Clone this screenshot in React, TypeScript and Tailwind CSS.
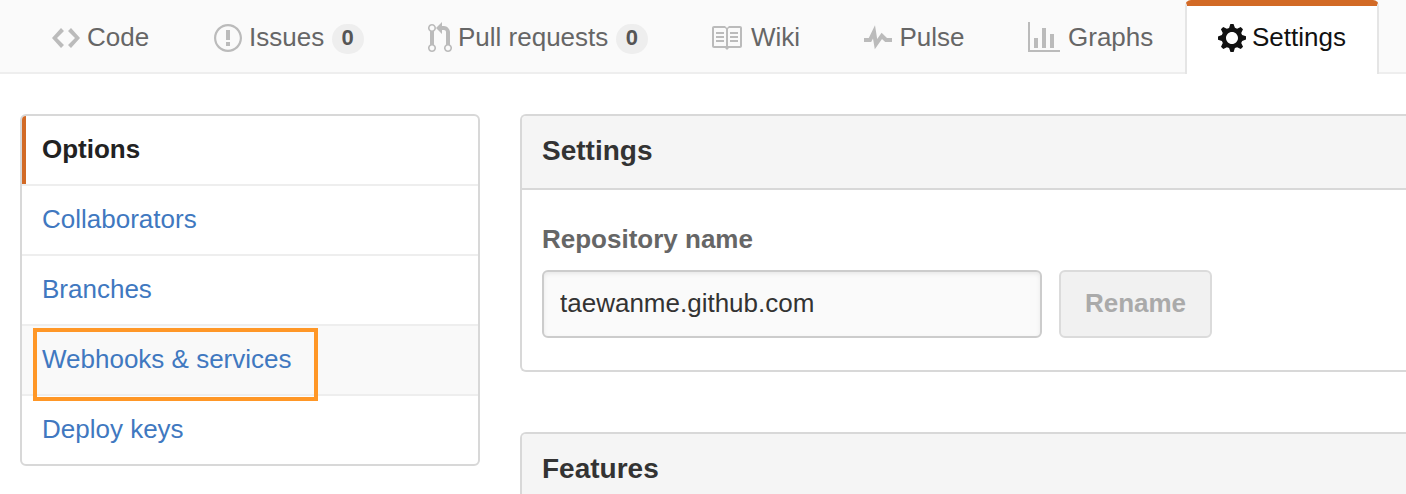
import React from "react";

const icons = {
  code: { w: 14, d: "M9.5 3L8 4.5 11.5 8 8 11.5 9.5 13 14 8 9.5 3zm-5 0L0 8l4.5 5L6 11.5 2.5 8 6 4.5 4.5 3z" },
  issue: { w: 14, d: "M7 2.1c3.25 0 5.9 2.65 5.9 5.9s-2.65 5.9-5.9 5.9A5.9 5.9 0 0 1 1.1 8c0-3.25 2.65-5.9 5.9-5.9zM7 1C3.14 1 0 4.14 0 8s3.14 7 7 7 7-3.14 7-7-3.14-7-7-7zm1 3H6v5h2V4zm0 6H6v2h2v-2z" },
  pull: { w: 12, d: "M11 11.28V5c-.03-.78-.34-1.47-.94-2.06C9.46 2.35 8.78 2.03 8 2H7V0L4 3l3 3V4h1c.27.02.48.11.69.31.21.2.3.42.31.69v6.28A1.993 1.993 0 0 0 10 15a1.993 1.993 0 0 0 1-3.72zm-1 2.92c-.66 0-1.2-.55-1.2-1.2 0-.65.55-1.2 1.2-1.2.65 0 1.2.55 1.2 1.2 0 .65-.55 1.2-1.2 1.2zM4 3c0-1.11-.89-2-2-2a1.993 1.993 0 0 0-1 3.72v6.56A1.993 1.993 0 0 0 2 15a1.993 1.993 0 0 0 1-3.72V4.72c.59-.34 1-.98 1-1.72zm-.8 10c0 .66-.55 1.2-1.2 1.2-.65 0-1.2-.55-1.2-1.2 0-.65.55-1.2 1.2-1.2.65 0 1.2.55 1.2 1.2zM2 4.2C1.34 4.2.8 3.65.8 3c0-.65.55-1.2 1.2-1.2.65 0 1.2.55 1.2 1.2 0 .65-.55 1.2-1.2 1.2z" },
  book: { w: 16, d: "M3 5h4v1H3V5zm0 3h4V7H3v1zm0 2h4V9H3v1zm11-5h-4v1h4V5zm0 2h-4v1h4V7zm0 2h-4v1h4V9zm2-6v9c0 .55-.45 1-1 1H9.5l-1 1-1-1H2c-.55 0-1-.45-1-1V3c0-.55.45-1 1-1h5.5l1 1 1-1H15c.55 0 1 .45 1 1zm-8 .5L7.5 3H2v9h6V3.5zm7-.5H9.5l-.5.5V12h6V3z" },
  pulse: { w: 14, d: "M11.5 8L8.8 5.4 6.6 8.5 5.5 1.6 2.38 8H0v2h3.6l.9-1.8.9 5.4L9 8.5l1.6 1.5H14V8h-2.5z" },
  graph: { w: 16, d: "M16 14v1H0V0h1v14h15zM5 13H3V8h2v5zm4 0H7V3h2v10zm4 0h-2V6h2v7z" },
  gear: { w: 14, d: "M14 8.77v-1.6l-1.94-.64-.45-1.09.88-1.84-1.13-1.13-1.81.91-1.09-.45-.69-1.92h-1.6l-.63 1.94-1.11.45-1.84-.88-1.13 1.13.91 1.81-.45 1.09L0 7.23v1.59l1.94.64.45 1.09-.88 1.84 1.13 1.13 1.81-.91 1.09.45.69 1.92h1.59l.63-1.94 1.11-.45 1.84.88 1.13-1.13-.92-1.81.47-1.09L14 8.75v.02zM7 11c-1.66 0-3-1.34-3-3s1.34-3 3-3 3 1.34 3 3-1.34 3-3 3z" },
};

function Icon({ name, className }: { name: keyof typeof icons; className: string }) {
  const icon = icons[name];
  return (
    <svg width={icon.w * 2} height={32} viewBox={`0 0 ${icon.w} 16`} className={`shrink-0 ${className}`} fill="currentColor" aria-hidden="true">
      <path d={icon.d} />
    </svg>
  );
}

type Tab = { icon: keyof typeof icons; label: string; width: string; gap: string; count?: number };

const tabs: Tab[] = [
  { icon: "code", label: "Code", width: "w-[162px]", gap: "mr-[7px]" },
  { icon: "issue", label: "Issues", width: "w-[214px]", gap: "mr-[7px]", count: 0 },
  { icon: "pull", label: "Pull requests", width: "w-[282px]", gap: "mr-1.5", count: 0 },
  { icon: "book", label: "Wiki", width: "w-[154px]", gap: "mr-[9px]" },
  { icon: "pulse", label: "Pulse", width: "w-[164px]", gap: "mr-[7.5px]" },
  { icon: "graph", label: "Graphs", width: "w-[158px]", gap: "mr-2" },
];

const menu = ["Options", "Collaborators", "Branches", "Webhooks & services", "Deploy keys"];

function MenuItem({ label }: { label: string }) {
  const selected = label === "Options";
  const highlighted = label === "Webhooks & services";
  const state = selected
    ? "border-l-4 border-l-[#d26a26] pl-4 font-bold text-[#222] rounded-tl-[4px]"
    : highlighted
      ? "relative bg-[#f9f9f9] pl-5 text-[#4078c0]"
      : "pl-5 text-[#4078c0]";
  return (
    <li className="border-b-2 border-[#eee] last:border-b-0">
      <a href="#" className={`flex h-[68px] items-start pt-[13px] leading-10 ${state}`}>
        {label}
        {highlighted && <span className="absolute top-0.5 left-[11px] z-10 h-[73px] w-[285px] border-4 border-[#ff9727]" />}
      </a>
    </li>
  );
}

function Panel({ title, children }: { title: string; children?: React.ReactNode }) {
  return (
    <section className="rounded-l-md border-2 border-r-0 border-[#d8d8d8]">
      <h2 className="h-[74px] rounded-tl-[4px] border-b-2 border-[#d8d8d8] bg-[#f5f5f5] pt-[15px] pl-5 text-[28px] leading-10 font-bold text-[#333]">
        {title}
      </h2>
      {children}
    </section>
  );
}

export default function App() {
  return (
    <div className="h-[494px] overflow-hidden bg-white font-['Liberation_Sans',Arial,sans-serif] text-[26px]">
      <nav className="flex h-[74px] pl-[52px] whitespace-nowrap text-[#666] shadow-[inset_0_-2px_0_#eee] bg-[#fafafa]">
        {tabs.map((tab) => (
          <a key={tab.label} href="#" className={`flex shrink-0 items-start ${tab.width}`}>
            <Icon name={tab.icon} className={`mt-[22px] text-[#bbb] ${tab.gap}`} />
            <span className="pt-[17px] leading-10">{tab.label}</span>
            {tab.count !== undefined && (
              <span className="mt-6 ml-[7.5px] h-[30px] w-8 rounded-full bg-[#eee] text-center text-[22px] leading-7 font-bold text-[#555]">
                {tab.count}
              </span>
            )}
          </a>
        ))}
        <a href="#" className="-ml-px flex h-[74px] w-[194px] shrink-0 items-start gap-1.5 rounded-t-md border-x-2 border-t-6 border-x-[#e5e5e5] border-t-[#d26a26] bg-white pl-[31px] text-[#111]">
          <Icon name="gear" className="mt-4" />
          <span className="pt-[11px] leading-10">Settings</span>
        </a>
      </nav>

      <main className="flex items-start gap-10 pt-10 pl-5">
        <ul className="w-[460px] shrink-0 rounded-md border-2 border-[#d8d8d8]">
          {menu.map((label) => (
            <MenuItem key={label} label={label} />
          ))}
        </ul>

        <div className="flex flex-1 flex-col gap-[60px]">
          <Panel title="Settings">
            <div className="h-[180px] px-5 pt-[29px]">
              <label htmlFor="repo" className="block h-[51px] leading-10 font-bold text-[#666]">
                Repository name
              </label>
              <div className="flex gap-[17px]">
                <input
                  id="repo"
                  defaultValue="taewanme.github.com"
                  className="h-[68px] w-[500px] rounded-md border-2 border-[#ccc] bg-[#fafafa] pb-0.5 pl-4 text-[#333] shadow-[inset_0_2px_4px_rgba(0,0,0,0.075)] outline-none"
                />
                <button className="h-[68px] w-[153px] rounded-md border-2 border-[#dbdbdb] bg-[#f1f1f1] pb-0.5 font-bold text-[#aaa]">
                  Rename
                </button>
              </div>
            </div>
          </Panel>
          <Panel title="Features" />
        </div>
      </main>
    </div>
  );
}
